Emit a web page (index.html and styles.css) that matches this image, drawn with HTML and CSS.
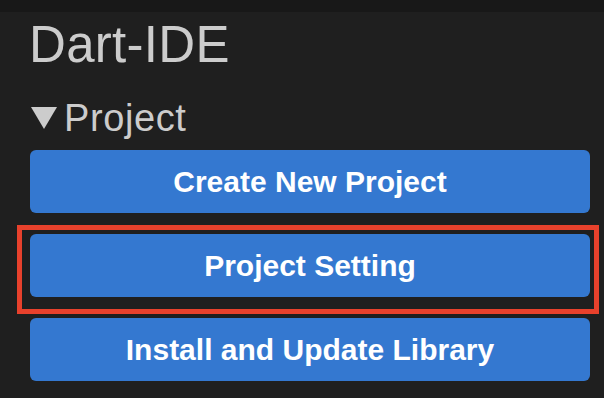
FILE: index.html
```html
<!DOCTYPE html>
<html lang="en">
<head>
    <meta charset="UTF-8">
    <meta name="viewport" content="width=device-width, initial-scale=1.0">
    <title>Dart-IDE</title>
    <link rel="stylesheet" href="styles.css">
</head>
<body>
<div class="top-bar"></div>

<div class="sidebar">
    <h1 class="title">Dart-IDE</h1>

    <div class="section-header">
        <span class="caret"></span>
        <span class="section-name">Project</span>
    </div>

    <div class="actions">
        <button class="action-btn">Create New Project</button>
        <button class="action-btn">Project Setting</button>
        <button class="action-btn">Install and Update Library</button>
    </div>
</div>

<!-- highlight around the second button -->
<div class="highlight-box"></div>
</body>
</html>
```

FILE: styles.css
```css
html, body {
    margin: 0;
    height: 100%;
}

body {
    position: relative;
    background-color: #1f1f1f;
    font-family: 'Liberation Sans', Arial, sans-serif;
    color: #cccccc;
    overflow: hidden;
}

.top-bar {
    height: 12px;
    background-color: #181818;
}

.sidebar {
    padding-left: 30px;
    width: 560px;
}

.title {
    margin: 3px 0 0 -1px;
    font-size: 51px;
    font-weight: normal;
    line-height: 60px;
    letter-spacing: 0.3px;
}

.section-header {
    display: flex;
    align-items: center;
    margin-top: 23px;
    height: 40px;
    margin-left: 1px;
}

.caret {
    width: 0;
    height: 0;
    border-left: 13px solid transparent;
    border-right: 13px solid transparent;
    border-top: 22px solid #cccccc;
    margin-right: 7px;
}

.section-name {
    font-size: 38px;
    line-height: 40px;
    letter-spacing: 0.6px;
}

.actions {
    display: flex;
    flex-direction: column;
    gap: 21px;
    margin-top: 12px;
}

.action-btn {
    height: 63px;
    width: 100%;
    border: none;
    border-radius: 6px;
    background-color: #3478d0;
    color: #ffffff;
    font-family: 'Liberation Sans', Arial, sans-serif;
    font-size: 30px;
    font-weight: bold;
    cursor: pointer;
}

.highlight-box {
    position: absolute;
    left: 17px;
    top: 225px;
    width: 572px;
    height: 79px;
    border: 5px solid #e8412c;
}
```
